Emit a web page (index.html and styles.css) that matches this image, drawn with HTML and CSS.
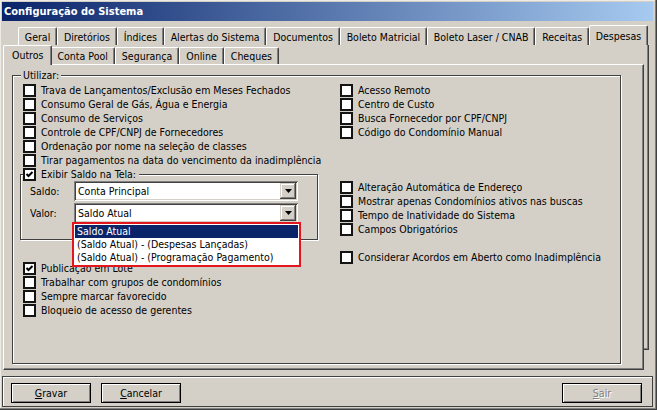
FILE: index.html
```html
<!DOCTYPE html>
<html lang="pt-BR">
<head>
<meta charset="utf-8">
<title>Configuração do Sistema</title>
<link rel="stylesheet" href="styles.css">
</head>
<body>
<div class="window">
  <div class="titlebar"><span class="title">Configuração do Sistema</span></div>
  <div class="tabctrl">
    <div class="tabrow back">
      <div class="tab">Geral</div>
      <div class="tab">Diretórios</div>
      <div class="tab">Índices</div>
      <div class="tab">Alertas do Sistema</div>
      <div class="tab">Documentos</div>
      <div class="tab">Boleto Matricial</div>
      <div class="tab">Boleto Laser / CNAB</div>
      <div class="tab">Receitas</div>
      <div class="tab hi">Despesas</div>
    </div>
    <div class="tabrow front">
      <div class="tab sel">Outros</div>
      <div class="tab">Conta Pool</div>
      <div class="tab">Segurança</div>
      <div class="tab">Online</div>
      <div class="tab">Cheques</div>
    </div>
    <div class="panel">
      <div class="group">
        <div class="group-caption">Utilizar:</div>
        <div class="cols">
          <div class="col left">
            <div class="chk"><span class="box"></span><span>Trava de Lançamentos/Exclusão em Meses Fechados</span></div>
            <div class="chk"><span class="box"></span><span>Consumo Geral de Gás, Água e Energia</span></div>
            <div class="chk"><span class="box"></span><span>Consumo de Serviços</span></div>
            <div class="chk"><span class="box"></span><span>Controle de CPF/CNPJ de Fornecedores</span></div>
            <div class="chk"><span class="box"></span><span>Ordenação por nome na seleção de classes</span></div>
            <div class="chk"><span class="box"></span><span>Tirar pagamentos na data do vencimento da inadimplência</span></div>
            <div class="subgroup">
              <div class="chk sub-caption"><span class="box"><svg class="tick" width="9" height="9" viewBox="0 0 9 9"><polyline points="1.5,4 3.5,6 7.5,2" fill="none" stroke="#000" stroke-width="2"/></svg></span><span>Exibir Saldo na Tela:</span></div>
              <div class="field">
                <span class="flabel">Saldo:</span>
                <div class="combo"><span>Conta Principal</span><span class="dd"><svg width="7" height="4" viewBox="0 0 7 4"><polygon points="0,0 7,0 3.5,4" fill="#000"/></svg></span></div>
              </div>
              <div class="field">
                <span class="flabel">Valor:</span>
                <div class="combo"><span>Saldo Atual</span><span class="dd"><svg width="7" height="4" viewBox="0 0 7 4"><polygon points="0,0 7,0 3.5,4" fill="#000"/></svg></span>
                  <div class="ddlist">
                    <div class="item sel">Saldo Atual</div>
                    <div class="item">(Saldo Atual) - (Despesas Lançadas)</div>
                    <div class="item">(Saldo Atual) - (Programação Pagamento)</div>
                  </div>
                </div>
              </div>
            </div>
            <div class="chk after"><span class="box"><svg class="tick" width="9" height="9" viewBox="0 0 9 9"><polyline points="1.5,4 3.5,6 7.5,2" fill="none" stroke="#000" stroke-width="2"/></svg></span><span>Publicação em Lote</span></div>
            <div class="chk"><span class="box"></span><span>Trabalhar com grupos de condomínios</span></div>
            <div class="chk"><span class="box"></span><span>Sempre marcar favorecido</span></div>
            <div class="chk"><span class="box"></span><span>Bloqueio de acesso de gerentes</span></div>
          </div>
          <div class="col right">
            <div class="chk"><span class="box"></span><span>Acesso Remoto</span></div>
            <div class="chk"><span class="box"></span><span>Centro de Custo</span></div>
            <div class="chk"><span class="box"></span><span>Busca Fornecedor por CPF/CNPJ</span></div>
            <div class="chk"><span class="box"></span><span>Código do Condomínio Manual</span></div>
            <div class="chk gap1"><span class="box"></span><span>Alteração Automática de Endereço</span></div>
            <div class="chk"><span class="box"></span><span>Mostrar apenas Condomínios ativos nas buscas</span></div>
            <div class="chk"><span class="box"></span><span>Tempo de Inatividade do Sistema</span></div>
            <div class="chk"><span class="box"></span><span>Campos Obrigatórios</span></div>
            <div class="chk gap2"><span class="box"></span><span>Considerar Acordos em Aberto como Inadimplência</span></div>
          </div>
        </div>
      </div>
    </div>
  </div>
  <div class="footer">
    <div class="btn"><span><u>G</u>ravar</span></div>
    <div class="btn"><span><u>C</u>ancelar</span></div>
    <div class="btn disabled"><span><u>S</u>air</span></div>
  </div>
</div>
</body>
</html>
```

FILE: styles.css
```css
* { box-sizing: border-box; }
html, body { margin: 0; padding: 0; }
body {
  width: 657px;
  height: 410px;
  overflow: hidden;
  background: #d4d0c8;
  color: #000;
  font-family: "DejaVu Sans Condensed", "DejaVu Sans", sans-serif;
  font-stretch: condensed;
  font-size: 10.5px;
}
.window {
  width: 657px;
  height: 410px;
  background: #d4d0c8;
  padding: 2px 4px 3px 2px;
  display: flex;
  flex-direction: column;
  box-shadow: inset -1px -1px #404040, inset -2px -2px #808080, inset 1px 1px #ecebe6;
}
.titlebar {
  height: 19px;
  flex: none;
  background: linear-gradient(to right, #0a246a, #a6caf0);
  color: #fff;
  font-weight: bold;
  font-size: 11px;
  display: flex;
  align-items: center;
  padding-left: 2px;
}
.tabctrl {
  position: relative;
  margin-top: 4px;
  flex: none;
}
.tabctrl::before {
  content: "";
  position: absolute;
  top: 20px;
  left: 12px;
  right: 4px;
  bottom: 20px;
  border-right: 1px solid #404040;
  border-bottom: 1px solid #404040;
  box-shadow: inset -1px -1px #808080;
}
.tabrow {
  display: flex;
  align-items: flex-end;
}
.tab {
  height: 18px;
  padding: 0 4px;
  display: flex;
  align-items: center;
  justify-content: center;
  white-space: nowrap;
  background: #d4d0c8;
  border-left: 1px solid #fff;
  border-top: 1px solid #fff;
  border-right: 1px solid #404040;
  border-radius: 2px 2px 0 0;
  box-shadow: inset -1px 0 #808080;
}
.tabrow.back {
  height: 20px;
  margin: 0 5px 0 16px;
}
.back .tab { flex: 1 1 auto; }
.back .tab.hi { height: 20px; }
.tabrow.front {
  height: 19px;
  padding-left: 3px;
}
.front .tab {
  height: 17px;
  padding: 0 6px;
}
.front .tab.sel {
  position: relative;
  z-index: 2;
  height: 20px;
  margin: 0 -2px -1px;
  padding: 0 8px 2px;
}
.panel {
  position: relative;
  z-index: 1;
  margin-left: 1px;
  width: 641px;
  height: 306px;
  background: #d4d0c8;
  border-top: 1px solid #fff;
  border-left: 1px solid #fff;
  border-right: 1px solid #404040;
  border-bottom: 1px solid #404040;
  box-shadow: inset -1px -1px #808080;
  padding: 10px 0 0 8px;
}
.group {
  width: 609px;
  height: 289px;
  border: 1px solid #404040;
  box-shadow: inset 1px 1px #fff, 1px 1px #fff;
}
.group-caption {
  display: block;
  width: max-content;
  height: 13px;
  line-height: 13px;
  margin: -7px 0 0 8px;
  padding: 0 2px;
  background: #d4d0c8;
}
.cols {
  display: flex;
  padding: 2px 0 0 10px;
}
.col.left { width: 317px; flex: none; }
.col.right { flex: 1; }
.chk {
  display: flex;
  align-items: flex-start;
  gap: 5px;
  height: 14px;
  line-height: 13px;
  white-space: nowrap;
}
.box {
  width: 13px;
  height: 13px;
  flex: none;
  background: #fff;
  border: 2px solid #141414;
  display: flex;
  align-items: center;
  justify-content: center;
}
.tick { display: block; }
.subgroup {
  position: relative;
  margin: 6px 0 0 -3px;
  width: 298px;
  height: 66px;
  border: 1px solid #404040;
  box-shadow: inset 1px 1px #fff, 1px 1px #fff;
}
.chk.sub-caption {
  width: max-content;
  height: 13px;
  margin: -7px 0 0 2px;
  padding-right: 3px;
  background: #d4d0c8;
}
.field {
  display: flex;
  align-items: center;
  height: 20px;
  padding-left: 9px;
}
.field + .field { margin-top: 2px; }
.flabel { width: 44px; flex: none; }
.combo {
  position: relative;
  width: 224px;
  height: 20px;
  background: #fff;
  display: flex;
  align-items: center;
  padding: 0 2px 0 4px;
  box-shadow: inset 1px 1px #808080, inset -1px -1px #fff, inset 2px 2px #404040, inset -2px -2px #d4d0c8;
}
.dd {
  margin-left: auto;
  width: 16px;
  height: 16px;
  background: #d4d0c8;
  display: flex;
  align-items: center;
  justify-content: center;
  box-shadow: inset -1px -1px #404040, inset 1px 1px #d4d0c8, inset -2px -2px #808080, inset 2px 2px #fff;
}
.dd svg { display: block; }
.ddlist {
  position: absolute;
  left: -2px;
  top: 19px;
  width: 229px;
  z-index: 5;
  background: #fff;
  border: 2px solid #e3161d;
  padding: 1px;
}
.item {
  height: 13px;
  line-height: 13px;
  padding-left: 2px;
  white-space: nowrap;
}
.item.sel {
  background: #0a246a;
  color: #fff;
}
.chk.after { margin-top: 22px; }
.chk.gap1 { margin-top: 41px; }
.chk.gap2 { margin-top: 14px; }
.footer {
  flex: none;
  margin-top: 6px;
  height: 31px;
  border: 1px solid #404040;
  box-shadow: inset 1px 1px #fff;
  display: flex;
  align-items: flex-start;
  gap: 10px;
  padding: 6px 10px 0 8px;
}
.btn {
  width: 80px;
  height: 20px;
  border: 1px solid #000;
  box-shadow: inset 1px 1px #fff, inset -1px -1px #808080;
  display: flex;
  align-items: center;
  justify-content: center;
}
.btn.disabled {
  margin-left: auto;
  color: #808080;
  text-shadow: 1px 1px #fff;
}
```
